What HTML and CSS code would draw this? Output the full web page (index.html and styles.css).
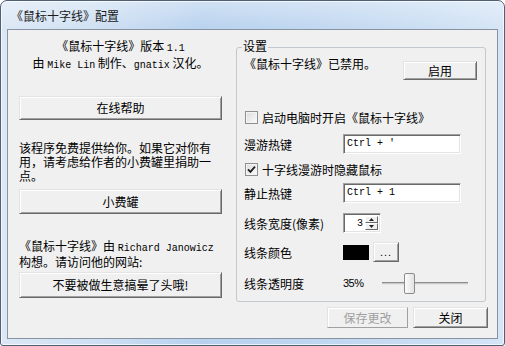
FILE: index.html
```html
<!DOCTYPE html>
<html lang="zh-CN">
<head>
  <meta charset="UTF-8">
  <title>《鼠标十字线》配置</title>
  <link rel="stylesheet" href="styles.css">
</head>
<body>

  <div class="ventana">
    <div class="titulo">《鼠标十字线》配置</div>

    <div class="cliente">
      <!-- COLUMNA IZQUIERDA -->
      <div class="izquierda">
        <p class="acerca">《鼠标十字线》版本 <span class="en">1.1</span><br>由 <span class="en">Mike Lin</span> 制作、<span class="en">gnatix</span> 汉化。</p>
        <button type="button" class="boton boton-ayuda">在线帮助</button>

        <p class="nota">该程序免费提供给你。如果它对你有<br>用，请考虑给作者的小费罐里捐助一<br>点。</p>
        <button type="button" class="boton boton-propina">小费罐</button>

        <p class="nota nota-autor">《鼠标十字线》由 <span class="en">Richard Janowicz</span><br>构想。请访问他的网站:</p>
        <button type="button" class="boton boton-web">不要被做生意搞晕了头哦!</button>
      </div>

      <!-- COLUMNA DERECHA -->
      <div class="derecha">
        <div class="grupo">
          <span class="leyenda">设置</span>

          <div class="fila fila-estado">
            <span>《鼠标十字线》已禁用。</span>
            <button type="button" class="boton boton-activar">启用</button>
          </div>

          <div class="fila fila-check fila-inicio">
            <span class="check"></span>
            <span>启动电脑时开启《鼠标十字线》</span>
          </div>

          <div class="fila fila-campo fila-hotkey">
            <span class="etiqueta">漫游热键</span>
            <div class="campo">Ctrl + '</div>
          </div>

          <div class="fila fila-check fila-ocultar">
            <span class="check">
              <svg width="11" height="11" viewBox="0 0 11 11"><path d="M2 5.3 L4.4 7.8 L9 2.6" fill="none" stroke="#1f1f1f" stroke-width="1.8"/></svg>
            </span>
            <span>十字线漫游时隐藏鼠标</span>
          </div>

          <div class="fila fila-campo fila-estatico">
            <span class="etiqueta">静止热键</span>
            <div class="campo">Ctrl + 1</div>
          </div>

          <div class="fila fila-campo fila-ancho">
            <span class="etiqueta">线条宽度(像素)</span>
            <div class="giro">
              <span class="giro-valor">3</span>
              <span class="giro-botones">
                <span class="giro-boton"><svg width="5" height="3" viewBox="0 0 5 3"><path d="M0 3 L2.5 0 L5 3Z" fill="#222"/></svg></span>
                <span class="giro-boton"><svg width="5" height="3" viewBox="0 0 5 3"><path d="M0 0 L2.5 3 L5 0Z" fill="#222"/></svg></span>
              </span>
            </div>
          </div>

          <div class="fila fila-campo fila-color">
            <span class="etiqueta">线条颜色</span>
            <span class="muestra"></span>
            <button type="button" class="boton boton-puntos">...</button>
          </div>

          <div class="fila fila-campo fila-opacidad">
            <span class="etiqueta">线条透明度</span>
            <span class="porcentaje">35%</span>
            <div class="deslizador">
              <span class="pista"></span>
              <span class="mando"></span>
            </div>
          </div>
        </div>

        <div class="acciones">
          <button type="button" class="boton boton-guardar" disabled>保存更改</button>
          <button type="button" class="boton boton-cerrar">关闭</button>
        </div>
      </div>
    </div>
  </div>

</body>
</html>
```

FILE: styles.css
```css
* {
  box-sizing: border-box;
}
body {
  margin: 0;
  background: #fff;
  font-family: "Noto Sans CJK SC", "Liberation Sans", sans-serif;
  font-size: 12px;
  color: #000;
}
.en {
  font-family: "Liberation Mono", monospace;
  font-size: 10px;
}

/* marco de la ventana */
.ventana {
  width: 505px;
  height: 346px;
  border: 1px solid #4f6074;
  border-radius: 7px 7px 3px 3px;
  padding: 0 6px 6px;
  display: flex;
  flex-direction: column;
  background:
    linear-gradient(to bottom, rgba(255,255,255,0.35), rgba(255,255,255,0) 30px),
    linear-gradient(to right, #dbe7f5 0%, #cfe0f3 18%, #b7d1ee 40%, #bfd6f0 62%, #cadef3 85%, #d5e5f6 100%);
  box-shadow: inset 0 0 0 1px rgba(255,255,255,0.7);
}
.titulo {
  height: 28px;
  line-height: 29px;
  padding-left: 4px;
  color: #1a1a1a;
}
.cliente {
  flex: 1;
  border: 1px solid #8793a2;
  background: #f0f0f0;
  display: grid;
  grid-template-columns: 203px 251px;
  column-gap: 14px;
  padding-left: 11px;
}

/* columna izquierda */
.izquierda {
  display: flex;
  flex-direction: column;
}
.acerca {
  margin: 9px 0 0;
  line-height: 14px;
  text-align: center;
  white-space: nowrap;
}
.nota {
  margin: 21px 0 0;
  line-height: 14px;
  white-space: nowrap;
}
.nota-autor {
  margin-top: 25px;
  line-height: 13px;
}

/* botones estilo clásico */
.boton {
  font-family: "Noto Sans CJK SC", sans-serif;
  font-size: 12px;
  color: #000;
  background: #f0f0f0;
  border: 1px solid;
  border-color: #e3e3e3 #696969 #696969 #e3e3e3;
  box-shadow: inset 1px 1px 0 #fff, inset -1px -1px 0 #a0a0a0;
  padding: 0;
  line-height: 1;
}
.boton-ayuda {
  margin-top: 23px;
  height: 24px;
}
.boton-propina {
  margin-top: 6px;
  height: 25px;
}
.boton-web {
  margin-top: 4px;
  height: 26px;
}

/* columna derecha */
.derecha {
  display: flex;
  flex-direction: column;
}
.grupo {
  position: relative;
  margin-top: 17px;
  width: 250px;
  border: 1px solid #c2c8ce;
  border-radius: 3px;
  padding: 9px 8px 7px 7px;
}
.leyenda {
  position: absolute;
  top: -9px;
  left: 5px;
  padding: 0 1px;
  line-height: 13px;
  background: #f0f0f0;
}
.fila {
  display: flex;
  align-items: center;
}
.fila-estado {
  align-items: flex-start;
  justify-content: space-between;
  line-height: 13px;
}
.boton-activar {
  margin-top: 4px;
  width: 74px;
  height: 19px;
}
.fila-check {
  height: 13px;
  gap: 4px;
  padding-left: 1px;
}
.fila-inicio {
  margin-top: 31px;
}
.fila-ocultar {
  margin-top: 9px;
}
.check {
  width: 13px;
  height: 13px;
  border: 1px solid #8e8f8f;
  background: linear-gradient(135deg, #dcdcdc, #fbfbfb);
  box-shadow: inset 0 0 0 1px #f4f4f4;
  display: flex;
  align-items: center;
  justify-content: center;
}
.fila-campo {
  height: 20px;
}
.fila-hotkey {
  margin-top: 10px;
}
.fila-estatico {
  margin-top: 7px;
}
.fila-ancho {
  margin-top: 10px;
}
.fila-color {
  margin-top: 9px;
}
.fila-opacidad {
  margin-top: 11px;
  height: 21px;
}
.etiqueta {
  width: 99px;
  flex: none;
}
.campo {
  width: 118px;
  height: 20px;
  background: #fff;
  border: 1px solid;
  border-color: #a0a0a0 #fff #fff #a0a0a0;
  box-shadow: inset 1px 1px 0 #696969, inset -1px -1px 0 #e3e3e3;
  padding: 0 3px;
  line-height: 18px;
  font-family: "Liberation Mono", monospace;
  font-size: 10px;
}

/* control de giro */
.giro {
  width: 38px;
  height: 20px;
  background: #fff;
  border: 1px solid;
  border-color: #a0a0a0 #fff #fff #a0a0a0;
  box-shadow: inset 1px 1px 0 #696969, inset -1px -1px 0 #e3e3e3;
  display: flex;
  justify-content: flex-end;
  padding: 2px 2px 2px 0;
}
.giro-valor {
  font-family: "Liberation Mono", monospace;
  font-size: 10px;
  line-height: 16px;
  margin-right: 2px;
}
.giro-botones {
  display: flex;
  flex-direction: column;
  width: 13px;
}
.giro-boton {
  flex: 1;
  background: #f0f0f0;
  border: 1px solid;
  border-color: #fff #696969 #696969 #fff;
  display: flex;
  align-items: center;
  justify-content: center;
}

/* color de línea */
.muestra {
  width: 26px;
  height: 15px;
  background: #000;
}
.boton-puntos {
  margin-left: 4px;
  width: 26px;
  height: 20px;
  font-family: "Liberation Sans", sans-serif;
  font-size: 11px;
  letter-spacing: 1px;
}

/* opacidad */
.porcentaje {
  width: 39px;
  flex: none;
  font-family: "Liberation Sans", sans-serif;
  font-size: 11px;
  letter-spacing: -0.5px;
  margin-top: -2px;
}
.deslizador {
  position: relative;
  width: 86px;
  height: 21px;
}
.pista {
  position: absolute;
  left: 0;
  right: 0;
  top: 9px;
  height: 3px;
  border-top: 1px solid #8d8d8d;
  border-bottom: 1px solid #e6e6e6;
  background: #c8c8c8;
}
.mando {
  position: absolute;
  left: 22px;
  top: 0;
  width: 11px;
  height: 21px;
  border: 1px solid #8b8b8b;
  border-radius: 2px;
  background: linear-gradient(to right, #fcfcfc, #e3e3e3);
}

/* botones inferiores */
.acciones {
  display: flex;
  justify-content: flex-end;
  gap: 5px;
  margin-top: 5px;
  margin-right: -1px;
}
.boton-guardar {
  width: 81px;
  height: 21px;
  color: #a0a0a0;
  border-color: #e3e3e3 #a0a0a0 #a0a0a0 #e3e3e3;
  box-shadow: inset 1px 1px 0 #fff;
}
.boton-cerrar {
  width: 75px;
  height: 21px;
}
```
